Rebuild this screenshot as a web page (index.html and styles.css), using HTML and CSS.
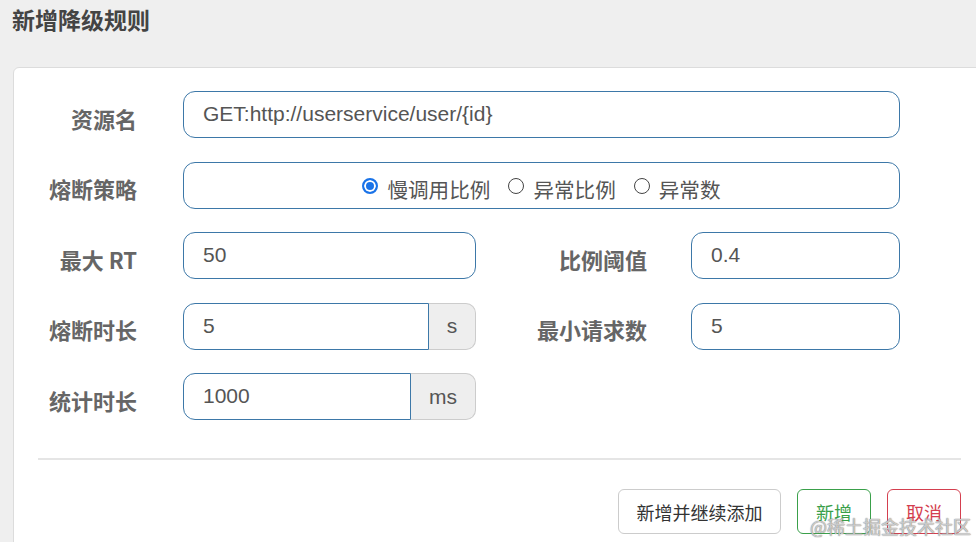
FILE: index.html
```html
<!DOCTYPE html>
<html lang="zh">
<head>
<meta charset="utf-8">
<link rel="stylesheet" href="styles.css">
</head>
<body>
<div class="page">
  <h4 class="title">新增降级规则</h4>
  <div class="card">
    <form class="form">
      <div class="row">
        <label class="label">资源名</label>
        <div class="control wide"><input class="input" value="GET:http://userservice/user/{id}"></div>
      </div>
      <div class="row">
        <label class="label">熔断策略</label>
        <div class="control wide radios">
          <span class="radio"><span class="dot checked"></span>慢调用比例</span>
          <span class="radio"><span class="dot"></span>异常比例</span>
          <span class="radio"><span class="dot"></span>异常数</span>
        </div>
      </div>
      <div class="row">
        <label class="label">最大 RT</label>
        <div class="control half"><input class="input" value="50"></div>
        <label class="label2">比例阈值</label>
        <div class="control small"><input class="input" value="0.4"></div>
      </div>
      <div class="row">
        <label class="label">熔断时长</label>
        <div class="control half group"><input class="input joined" value="5"><span class="addon addon-s">s</span></div>
        <label class="label2">最小请求数</label>
        <div class="control small"><input class="input" value="5"></div>
      </div>
      <div class="row">
        <label class="label">统计时长</label>
        <div class="control half group"><input class="input joined" value="1000"><span class="addon addon-ms">ms</span></div>
      </div>
    </form>
    <div class="divider"></div>
    <div class="footer">
      <button class="btn btn-default" type="button">新增并继续添加</button>
      <button class="btn btn-success" type="button">新增</button>
      <button class="btn btn-danger" type="button">取消</button>
    </div>
  </div>
  <div class="watermark">@稀土掘金技术社区</div>
</div>
</body>
</html>
```
FILE: styles.css
```css
html, body {
  margin: 0;
  padding: 0;
  overflow: hidden;
}
body {
  background: #efefef;
  font-family: "Liberation Sans", "Noto Sans CJK SC", sans-serif;
  width: 976px;
  height: 542px;
}
.page {
  position: relative;
  width: 976px;
  height: 542px;
}
.title {
  margin: 0;
  padding: 3px 0 0 12px;
  height: 67px;
  box-sizing: border-box;
  font-family: "Noto Sans CJK SC", sans-serif;
  font-size: 23px;
  line-height: 32px;
  font-weight: 700;
  color: #444;
}
.card {
  margin-left: 13px;
  width: 973px;
  height: 476px;
  box-sizing: border-box;
  background: #fff;
  border: 1px solid #dcdcdc;
  border-radius: 6px 0 0 0;
  padding: 23px 24px 0 0;
}
.form {
  display: flex;
  flex-direction: column;
  gap: 23.5px;
}
.row {
  display: flex;
  align-items: center;
  height: 47px;
}
.label, .label2 {
  font-family: "Noto Sans CJK SC", sans-serif;
  font-weight: 700;
  font-size: 22px;
  color: #666;
  text-align: right;
  padding-top: 6px;
  box-sizing: border-box;
  white-space: nowrap;
}
.label {
  width: 123px;
  margin-right: 46px;
}
.label2 {
  width: 171px;
  margin-right: 44px;
}
.control {
  height: 47px;
  display: flex;
}
.wide { width: 717px; }
.half { width: 293px; }
.small { width: 209px; }
.input {
  flex: 1;
  min-width: 0;
  height: 47px;
  box-sizing: border-box;
  border: 1px solid #3d78a8;
  border-radius: 12px;
  padding: 0 19px 1px;
  font-family: "Liberation Sans", "Noto Sans CJK SC", sans-serif;
  font-size: 21px;
  color: #555;
  background: #fff;
  outline: none;
}
.joined {
  border-radius: 12px 0 0 12px;
}
.addon {
  height: 47px;
  box-sizing: border-box;
  border: 1px solid #ccc;
  border-left: 0;
  border-radius: 0 10px 10px 0;
  background: #eee;
  color: #555;
  font-size: 21px;
  display: flex;
  align-items: center;
  justify-content: center;
}
.addon-s { width: 47px; }
.addon-ms { width: 65px; }
.radios {
  box-sizing: border-box;
  border: 1px solid #3d78a8;
  border-radius: 12px;
  justify-content: center;
  align-items: center;
  gap: 18px;
  padding-top: 8px;
}
.radio {
  display: flex;
  align-items: center;
  font-family: "Noto Sans CJK SC", sans-serif;
  font-size: 20.6px;
  color: #555;
}
.dot {
  width: 16px;
  height: 16px;
  box-sizing: border-box;
  border-radius: 50%;
  border: 1px solid #444;
  margin-right: 9px;
  margin-top: -6px;
  background: #fff;
}
.dot.checked {
  border: 2px solid #1a73e8;
  background: #1a73e8;
  box-shadow: inset 0 0 0 2px #fff;
}
.divider {
  margin: 38px 0 0 24px;
  height: 2px;
  background: #e5e5e5;
}
.footer {
  display: flex;
  justify-content: flex-end;
  gap: 16px;
  margin-top: 29px;
}
.btn {
  height: 45px;
  box-sizing: border-box;
  border-radius: 6px;
  background: #fff;
  font-family: "Noto Sans CJK SC", sans-serif;
  font-size: 18px;
  padding: 0 17px;
  cursor: pointer;
}
.btn-default {
  border: 1px solid #ccc;
  color: #333;
  width: 163px;
}
.btn-success {
  border: 1px solid #3aa04a;
  color: #3aa04a;
  width: 74px;
}
.btn-danger {
  border: 1px solid #d43f4f;
  color: #d43f4f;
  width: 74px;
}
.watermark {
  position: absolute;
  left: 810px;
  top: 513px;
  font-family: "Noto Sans CJK SC", sans-serif;
  font-size: 18px;
  color: rgba(255, 255, 255, 0.6);
  text-shadow: 0 0 1px rgba(120, 120, 120, 0.9), 0 0 1px rgba(120, 120, 120, 0.9);
  white-space: nowrap;
}
```
